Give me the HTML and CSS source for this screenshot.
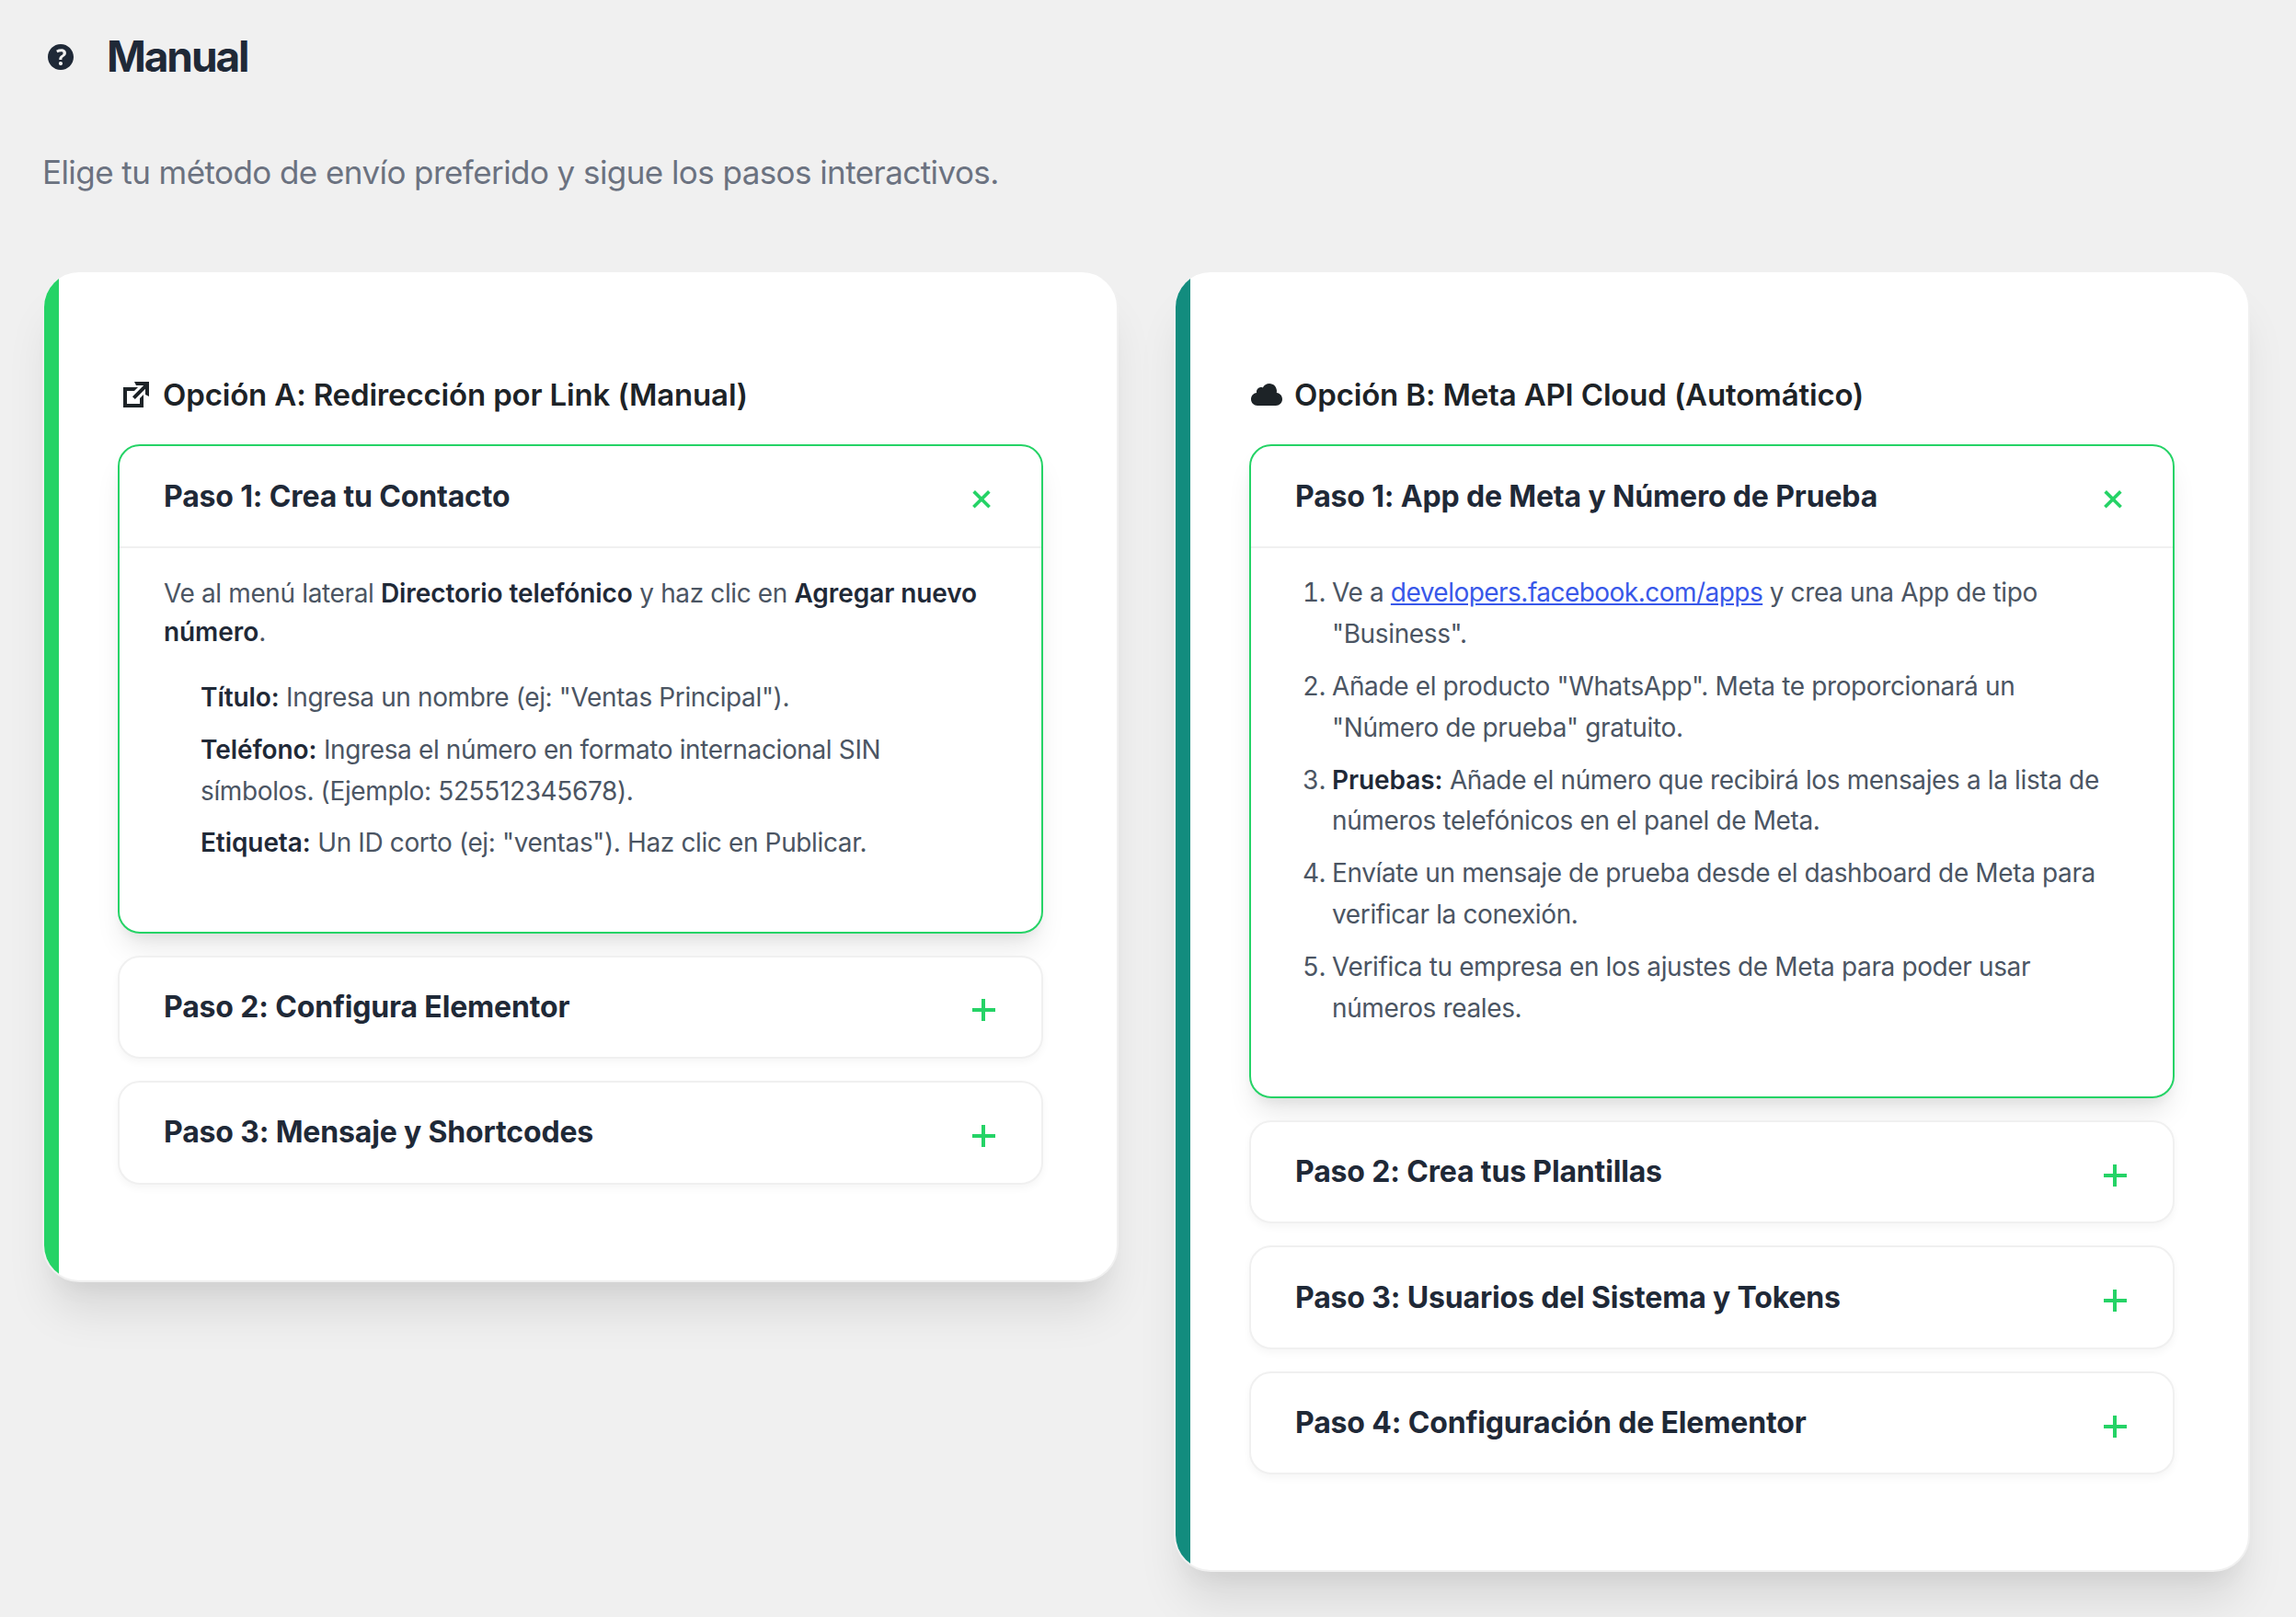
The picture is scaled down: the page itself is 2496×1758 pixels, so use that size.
FILE: index.html
```
<!DOCTYPE html>
<html lang="es">
<head>
    <meta charset="UTF-8">
    <meta name="viewport" content="width=device-width, initial-scale=1.0">
    <title>Manual</title>
    <link rel="stylesheet" href="styles.css">
</head>
<body>
    <div class="wrap">
        <header class="header">
            <svg class="icon" viewBox="0 0 20 20"><path d="M17 10c0-3.87-3.14-7-7-7-3.87 0-7 3.13-7 7s3.13 7 7 7c3.86 0 7-3.13 7-7zm-6.3 1.48H9.14v-.43c0-.38.08-.7.24-.98s.46-.57.88-.89c.41-.29.68-.53.81-.71.14-.18.2-.39.2-.62 0-.25-.09-.44-.28-.58-.19-.13-.45-.19-.79-.19-.58 0-1.25.19-2 .57l-.64-1.28c.87-.49 1.8-.74 2.77-.74.81 0 1.45.2 1.92.58.48.39.71.91.71 1.55 0 .43-.09.8-.29 1.11-.19.32-.57.67-1.11 1.06-.38.28-.61.49-.71.63-.1.15-.15.34-.15.57v.35zm-1.47 2.74c-.18-.17-.27-.42-.27-.73 0-.33.08-.58.26-.75s.43-.25.77-.25c.32 0 .57.09.75.26s.27.42.27.74c0 .3-.09.55-.27.72-.18.18-.43.27-.75.27-.33 0-.58-.09-.76-.26z"/></svg>
            <h1 class="header__title">Manual</h1>
        </header>
        <p class="intro">Elige tu método de envío preferido y sigue los pasos interactivos.</p>

        <div class="grid">
            <section class="card card--link">
                <h2 class="card__title">
                    <svg class="icon" viewBox="0 0 20 20"><path d="M9 3h8v8l-2-1V6.92l-5.6 5.59-1.41-1.41L14.08 5H10zm3 12v-3l2-2v7H3V6h8L9 8H5v7h7z"/></svg>
                    <span>Opción A: Redirección por Link (Manual)</span>
                </h2>
                <div class="step step--open">
                    <div class="step__header">
                        <h3 class="step__title">Paso 1: Crea tu Contacto</h3>
                        <span class="step__toggle"></span>
                    </div>
                    <div class="step__body">
                        <p>Ve al menú lateral <strong>Directorio telefónico</strong> y haz clic en <strong>Agregar nuevo número</strong>.</p>
                        <ul>
                            <li><strong>Título:</strong> Ingresa un nombre (ej: "Ventas Principal").</li>
                            <li><strong>Teléfono:</strong> Ingresa el número en formato internacional SIN símbolos. (Ejemplo: 525512345678).</li>
                            <li><strong>Etiqueta:</strong> Un ID corto (ej: "ventas"). Haz clic en Publicar.</li>
                        </ul>
                    </div>
                </div>
                <div class="step">
                    <div class="step__header">
                        <h3 class="step__title">Paso 2: Configura Elementor</h3>
                        <span class="step__toggle"></span>
                    </div>
                </div>
                <div class="step">
                    <div class="step__header">
                        <h3 class="step__title">Paso 3: Mensaje y Shortcodes</h3>
                        <span class="step__toggle"></span>
                    </div>
                </div>
            </section>

            <section class="card card--cloud">
                <h2 class="card__title">
                    <svg class="icon" viewBox="0 0 20 20"><path d="M14.9 9c1.8.2 3.1 1.7 3.1 3.5 0 1.9-1.6 3.5-3.5 3.5h-10C2.6 16 1 14.4 1 12.5 1 10.7 2.3 9.3 4.1 9 4 8.9 4 8.7 4 8.5 4 7.1 5.1 6 6.5 6c.3 0 .7.1.9.2C8.1 4.9 9.4 4 11 4c2.2 0 4 1.8 4 4 0 .4-.1.7-.1 1z"/></svg>
                    <span>Opción B: Meta API Cloud (Automático)</span>
                </h2>
                <div class="step step--open">
                    <div class="step__header">
                        <h3 class="step__title">Paso 1: App de Meta y Número de Prueba</h3>
                        <span class="step__toggle"></span>
                    </div>
                    <div class="step__body">
                        <ol>
                            <li>Ve a <a href="#">developers.facebook.com/apps</a> y crea una App de tipo "Business".</li>
                            <li>Añade el producto "WhatsApp". Meta te proporcionará un "Número de prueba" gratuito.</li>
                            <li><strong>Pruebas:</strong> Añade el número que recibirá los mensajes a la lista de números telefónicos en el panel de Meta.</li>
                            <li>Envíate un mensaje de prueba desde el dashboard de Meta para verificar la conexión.</li>
                            <li>Verifica tu empresa en los ajustes de Meta para poder usar números reales.</li>
                        </ol>
                    </div>
                </div>
                <div class="step">
                    <div class="step__header">
                        <h3 class="step__title">Paso 2: Crea tus Plantillas</h3>
                        <span class="step__toggle"></span>
                    </div>
                </div>
                <div class="step">
                    <div class="step__header">
                        <h3 class="step__title">Paso 3: Usuarios del Sistema y Tokens</h3>
                        <span class="step__toggle"></span>
                    </div>
                </div>
                <div class="step">
                    <div class="step__header">
                        <h3 class="step__title">Paso 4: Configuración de Elementor</h3>
                        <span class="step__toggle"></span>
                    </div>
                </div>
            </section>
        </div>
    </div>
</body>
</html>
```

FILE: styles.css
```
* { margin: 0; padding: 0; box-sizing: border-box; }
body {
    min-height: 100vh;
    font: 28px/1.5 Inter, "Liberation Sans", sans-serif;
    background: #f0f0f0;
    color: #4b5563;
}
.wrap{
    padding: 32px 50px 0 46px;
}
.icon{
    width: 40px;
    height: 40px;
    flex: none;
    fill: currentColor;
}
.header{
    display: flex;
    align-items: center;
    gap: 30px;
    height: 60px;
    color: #1f2937;
}
.header__title{
    padding-bottom: 2px;
    font-size: 46px;
    font-weight: 750;
    letter-spacing: -2.1px;
}
.intro{
    margin-top: 68px;
    height: 54px;
    line-height: 54px;
    font-size: 35px;
    letter-spacing: -0.57px;
    color: #6b7280;
}
.grid{
    display: grid;
    grid-template-columns: 1fr 1fr;
    gap: 60px;
    align-items: start;
    margin-top: 80px;
}
.card{
    position: relative;
    padding: 101.4px 80px 80px;
    background: #fff;
    border: 2px solid #f0f0f0;
    border-radius: 40px;
    overflow: hidden;
    box-shadow: 0 40px 50px -10px rgba(0,0,0,0.1), 0 20px 20px -10px rgba(0,0,0,0.04);
}
/* franja de color a la izquierda */
.card::before{
    content: '';
    position: absolute;
    top: 0;
    bottom: 0;
    left: 0;
    width: 16px;
}
.card--link::before{
    background: #25d366;
}
.card--cloud::before{
    background: #128c7e;
}
.card__title{
    display: flex;
    align-items: center;
    gap: 9px;
    height: 64px;
    margin-bottom: 22px;
    font-size: 33px;
    font-weight: 600;
    letter-spacing: -0.16px;
    color: #1d2327;
}
.step{
    margin-bottom: 24px;
    background: #fff;
    border: 2px solid #f0f0f0;
    border-radius: 24px;
    overflow: hidden;
    box-shadow: 0 4px 8px rgba(0,0,0,0.04);
}
.step--open{
    border-color: #25d366;
    box-shadow: 0 20px 30px -6px rgba(0,0,0,0.1), 0 8px 12px -4px rgba(0,0,0,0.05);
}
.step__header{
    display: flex;
    justify-content: space-between;
    align-items: center;
    height: 108.5px;
    padding: 0 48px;
}
.step__title{
    font-size: 32px;
    font-weight: 700;
    letter-spacing: -0.16px;
    color: #1f2937;
}
.step__toggle{
    width: 25px;
    height: 24px;
    margin-top: 7px;
    margin-right: 2.5px;
    background: linear-gradient(#25d366, #25d366) center/100% 4px no-repeat,
                linear-gradient(#25d366, #25d366) center/4px 100% no-repeat;
}
.step--open .step__toggle{
    width: 24px;
    margin-top: 6px;
    margin-right: 5px;
    background-size: 100% 3.6px, 3.6px 100%;
    transform: rotate(45deg);
}
.step__body{
    padding: 26.5px 48px 61.5px;
    border-top: 2px solid #f0f0f0;
    letter-spacing: -0.37px;
}
.step__body p{
    margin: 1.6px 0 28px;
}
.step__body strong{
    font-weight: 600;
    letter-spacing: -0.08px;
    color: #1f2937;
}
.step__body ul,
.step__body ol{
    padding-left: 40px;
    padding-right: 12px;
    line-height: 44.8px;
}
.step__body ul{
    list-style: none;
}
.step__body li{
    margin-bottom: 12px;
}
.step__body a{
    color: #3858e9;
    letter-spacing: -0.53px;
}
```
